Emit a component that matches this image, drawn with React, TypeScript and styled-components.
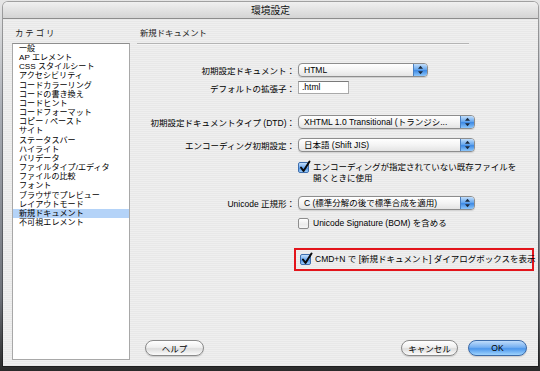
import * as React from 'react';
import styled, { createGlobalStyle } from 'styled-components';

const GlobalStyle = createGlobalStyle`
    html, body {
        margin: 0;
        width: 540px;
        height: 371px;
        overflow: hidden;
    }
    body {
        background: linear-gradient(#e6e6e6 0, #a9adb5 30%, #6d7179 80%, #2a2a2a 100%);
        font-family: "Liberation Sans", "Noto Sans CJK JP", sans-serif;
        color: #000;
    }
`;

const Desktop = styled.div`
    padding: 2px 2px 0 3px;
`;

const Window = styled.div`
    width: 535px;
    height: 364px;
    display: flex;
    flex-direction: column;
    border-radius: 5px 5px 0 0;
    overflow: hidden;
    box-shadow: 0 1px 0 #1e1e1e, 0 0 0 1px rgba(0, 0, 0, 0.3);
    background: repeating-linear-gradient(#efefef 0 1px, #e8e8e8 1px 2px);
`;

const TitleBar = styled.div`
    height: 16px;
    flex: none;
    display: flex;
    align-items: center;
    justify-content: center;
    background: linear-gradient(#f0f0f0, #d4d4d4);
    border-bottom: 1px solid #8c8c8c;
    font-size: 9.8px;
    color: #111;
`;

const Body = styled.div`
    flex: 1;
    display: flex;
    padding: 8px 11px 6px 9px;
    min-height: 0;
`;

const Sidebar = styled.div`
    width: 118px;
    flex: none;
    display: flex;
    flex-direction: column;
`;

const SectionLabel = styled.div<{ $spacing?: number }>`
    height: 12px;
    line-height: 12px;
    font-size: 8.4px;
    letter-spacing: ${p => p.$spacing || 0}px;
    padding-left: 3px;
    margin-bottom: 4px;
    color: #1a1a1a;
`;

const CategoryList = styled.div`
    flex: 1;
    background: #fff;
    border: 1px solid #a8a8a8;
    border-top-color: #8e8e8e;
`;

const CategoryItem = styled.div<{ $selected?: boolean }>`
    height: 9.16px;
    line-height: 9.16px;
    font-size: 8.1px;
    padding-left: 6px;
    white-space: nowrap;
    background: ${p => (p.$selected ? '#b4d3f8' : 'transparent')};
`;

const Main = styled.div`
    flex: 1;
    min-width: 0;
    margin-left: 7px;
    display: flex;
    flex-direction: column;
`;

const Rule = styled.div`
    width: 332px;
    height: 1px;
    background: #b4b4b4;
    border-bottom: 1px solid #f6f6f6;
`;

const Row = styled.div<{ $top: number }>`
    display: flex;
    align-items: center;
    margin-top: ${p => p.$top}px;
`;

const FieldLabel = styled.div`
    width: 158px;
    flex: none;
    margin-right: 3px;
    text-align: right;
    font-size: 8.5px;
    white-space: nowrap;
`;

const PopupBox = styled.div<{ $width: number }>`
    width: ${p => p.$width}px;
    height: 14px;
    flex: none;
    box-sizing: border-box;
    display: flex;
    border: 1px solid #8d8d8d;
    border-radius: 4px;
    overflow: hidden;
    background: linear-gradient(#ffffff, #f4f4f4 50%, #e4e4e4);
    box-shadow: 0 1px 1px rgba(0, 0, 0, 0.12);
`;

const PopupText = styled.div`
    flex: 1;
    padding-left: 5px;
    font-size: 8.5px;
    line-height: 12px;
    white-space: nowrap;
    overflow: hidden;
`;

const Stepper = styled.div`
    width: 13px;
    flex: none;
    display: flex;
    align-items: center;
    justify-content: center;
    border-left: 1px solid #4a7fc0;
    background: linear-gradient(#c2defb, #6aa9ee 45%, #3f8ae4 55%, #8cc6fb);
`;

const TextField = styled.div`
    width: 51px;
    height: 13px;
    flex: none;
    box-sizing: border-box;
    background: #fff;
    border: 1px solid #a9a9a9;
    border-top-color: #7a7a7a;
    padding-left: 3px;
    font-size: 8.5px;
    line-height: 11px;
`;

const CheckRow = styled.div<{ $top: number }>`
    display: flex;
    align-items: flex-start;
    margin-top: ${p => p.$top}px;
    margin-left: 161px;
`;

const CheckText = styled.div`
    font-size: 8.5px;
    line-height: 10.5px;
    margin-left: 4px;
    white-space: nowrap;
`;

const Box = styled.div<{ $checked?: boolean }>`
    width: 11px;
    height: 11px;
    flex: none;
    box-sizing: border-box;
    position: relative;
    border-radius: 2px;
    border: 1px solid ${p => (p.$checked ? '#3f6fae' : '#8e8e8e')};
    background: ${p =>
        p.$checked
            ? 'linear-gradient(#c4e0fc, #6eaaf0 50%, #4a91e6 55%, #9ccdfb)'
            : 'linear-gradient(#ffffff, #ececec 60%, #f6f6f6)'};

    & > svg {
        position: absolute;
        left: 0;
        top: -3px;
    }
`;

const Highlight = styled.div`
    margin-top: 19px;
    margin-left: 157px;
    width: 240px;
    height: 23px;
    flex: none;
    box-sizing: border-box;
    border: 2px solid #e3141b;
    display: flex;
    align-items: center;
    padding-left: 4px;
`;

const Footer = styled.div`
    margin-top: auto;
    margin-bottom: 4px;
    display: flex;
    align-items: center;
    padding-left: 8px;
`;

const PillButton = styled.div<{ $width: number; $primary?: boolean }>`
    width: ${p => p.$width}px;
    height: 16px;
    flex: none;
    box-sizing: border-box;
    border-radius: 8px;
    display: flex;
    align-items: center;
    justify-content: center;
    font-size: 8.5px;
    border: 1px solid ${p => (p.$primary ? '#3b6aa8' : '#8a8a8a')};
    background: ${p =>
        p.$primary
            ? 'linear-gradient(#bfdcfb, #76b0f1 45%, #4d97ec 55%, #9fd3fd)'
            : 'linear-gradient(#ffffff, #f0f0f0 45%, #dddddd 55%, #fbfbfb)'};
    box-shadow: 0 1px 1px rgba(0, 0, 0, 0.15);
    margin-left: ${p => (p.$primary ? 10 : 0)}px;
`;

const Spacer = styled.div`
    flex: 1;
`;

const categories = [
    '一般',
    'AP エレメント',
    'CSS スタイルシート',
    'アクセシビリティ',
    'コードカラーリング',
    'コードの書き換え',
    'コードヒント',
    'コードフォーマット',
    'コピー / ペースト',
    'サイト',
    'ステータスバー',
    'ハイライト',
    'バリデータ',
    'ファイルタイプ/エディタ',
    'ファイルの比較',
    'フォント',
    'ブラウザでプレビュー',
    'レイアウトモード',
    '新規ドキュメント',
    '不可視エレメント',
];

const Arrows = () => (
    <svg width="7" height="10" viewBox="0 0 7 10">
        <path d="M3.5 0.8 L6 3.8 L1 3.8 Z" fill="#1c2a3c" />
        <path d="M3.5 9.2 L6 6.2 L1 6.2 Z" fill="#1c2a3c" />
    </svg>
);

const Popup = ({ width, value }: { width: number; value: string }) => (
    <PopupBox $width={width}>
        <PopupText>{value}</PopupText>
        <Stepper>
            <Arrows />
        </Stepper>
    </PopupBox>
);

const Checkbox = ({ checked }: { checked?: boolean }) => (
    <Box $checked={checked}>
        {checked && (
            <svg width="12" height="13" viewBox="0 0 12 13">
                <path d="M2 7.5 L4.5 11 L10.5 1.5" fill="none" stroke="#0c0c0c" strokeWidth="2" strokeLinecap="round" strokeLinejoin="round" />
            </svg>
        )}
    </Box>
);

export default function App() {
    return (
        <Desktop>
            <GlobalStyle />
            <Window>
                <TitleBar>環境設定</TitleBar>
                <Body>
                    <Sidebar>
                        <SectionLabel $spacing={2}>カテゴリ</SectionLabel>
                        <CategoryList>
                            {categories.map(name => (
                                <CategoryItem key={name} $selected={name === '新規ドキュメント'}>
                                    {name}
                                </CategoryItem>
                            ))}
                        </CategoryList>
                    </Sidebar>
                    <Main>
                        <SectionLabel>新規ドキュメント</SectionLabel>
                        <Rule />
                        <Row $top={18}>
                            <FieldLabel>初期設定ドキュメント：</FieldLabel>
                            <Popup width={130} value="HTML" />
                        </Row>
                        <Row $top={4}>
                            <FieldLabel>デフォルトの拡張子：</FieldLabel>
                            <TextField>.html</TextField>
                        </Row>
                        <Row $top={21}>
                            <FieldLabel>初期設定ドキュメントタイプ (DTD)：</FieldLabel>
                            <Popup width={177} value="XHTML 1.0 Transitional (トランジシ..." />
                        </Row>
                        <Row $top={9}>
                            <FieldLabel>エンコーディング初期設定：</FieldLabel>
                            <Popup width={177} value="日本語 (Shift JIS)" />
                        </Row>
                        <CheckRow $top={10}>
                            <Checkbox checked />
                            <CheckText>
                                エンコーディングが指定されていない既存ファイルを
                                <br />
                                開くときに使用
                            </CheckText>
                        </CheckRow>
                        <Row $top={13}>
                            <FieldLabel>Unicode 正規形：</FieldLabel>
                            <Popup width={177} value="C (標準分解の後で標準合成を適用)" />
                        </Row>
                        <CheckRow $top={8}>
                            <Checkbox />
                            <CheckText>Unicode Signature (BOM) を含める</CheckText>
                        </CheckRow>
                        <Highlight>
                            <Checkbox checked />
                            <CheckText>CMD+N で [新規ドキュメント] ダイアログボックスを表示</CheckText>
                        </Highlight>
                        <Footer>
                            <PillButton $width={59}>ヘルプ</PillButton>
                            <Spacer />
                            <PillButton $width={57}>キャンセル</PillButton>
                            <PillButton $width={59} $primary>
                                OK
                            </PillButton>
                        </Footer>
                    </Main>
                </Body>
            </Window>
        </Desktop>
    );
}
